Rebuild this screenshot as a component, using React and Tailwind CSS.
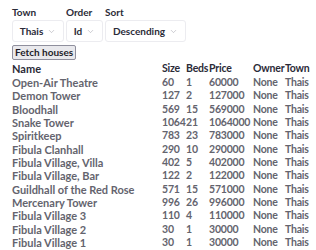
import React from 'react';
import { ChevronDown } from 'lucide-react';

const HOUSES = [
  ['Open-Air Theatre', 60, 1, 60000],
  ['Demon Tower', 127, 2, 127000],
  ['Bloodhall', 569, 15, 569000],
  ['Snake Tower', 1064, 21, 1064000],
  ['Spiritkeep', 783, 23, 783000],
  ['Fibula Clanhall', 290, 10, 290000],
  ['Fibula Village, Villa', 402, 5, 402000],
  ['Fibula Village, Bar', 122, 2, 122000],
  ['Guildhall of the Red Rose', 571, 15, 571000],
  ['Mercenary Tower', 996, 26, 996000],
  ['Fibula Village 3', 110, 4, 110000],
  ['Fibula Village 2', 30, 1, 30000],
  ['Fibula Village 1', 30, 1, 30000],
];

const rowCls = 'grid grid-cols-[150px_24px_23px_44px_32px_1fr] leading-[13.33px] whitespace-nowrap';
const numCls = 'text-[10.5px] tracking-[-0.2px]';

function Field({ label, value, width }) {
  return (
    <div className="flex flex-col">
      <span className="leading-[16px] text-[#2b2b38]">{label}</span>
      <div className={`${width} h-[22px] flex items-center justify-center gap-1 bg-white border border-[#ececf0] rounded-[3px] text-[#2b2b38]`}>
        <span>{value}</span>
        <ChevronDown size={9} className="text-[#a5a5ae]" strokeWidth={1.5} />
      </div>
    </div>
  );
}

export default function App() {
  return (
    <div className="px-3 pt-1 font-['Lato',sans-serif] font-bold text-[10px] bg-white">
      <div className="flex gap-[2px]">
        <Field label="Town" value="Thais" width="w-[52px]" />
        <Field label="Order" value="Id" width="w-[37px]" />
        <Field label="Sort" value="Descending" width="w-[81px]" />
      </div>
      <button className="mt-[3px] h-[15px] px-[2px] bg-[#e9e9ed] border border-[#8f8f9d] rounded-[2px] text-[#1d1d28] leading-[13px]">
        Fetch houses
      </button>
      <div className="mt-[1px] text-[11px]">
        <div className={`${rowCls} text-[#2b2b38] leading-[15px]`}>
          <span>Name</span>
          <span className={numCls}>Size</span>
          <span className={numCls}>Beds</span>
          <span className={numCls}>Price</span>
          <span className={numCls}>Owner</span>
          <span className={numCls}>Town</span>
        </div>
        {HOUSES.map(([name, size, beds, price]) => (
          <div key={name} className={`${rowCls} text-[#64646e]`}>
            <span>{name}</span>
            <span className={numCls}>{size}</span>
            <span className={numCls}>{beds}</span>
            <span className={numCls}>{price}</span>
            <span className={numCls}>None</span>
            <span className={numCls}>Thais</span>
          </div>
        ))}
      </div>
    </div>
  );
}
